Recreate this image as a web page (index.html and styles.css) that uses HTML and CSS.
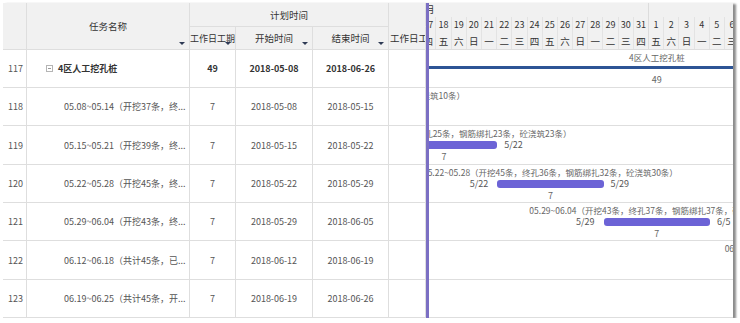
FILE: index.html
```html
<!DOCTYPE html>
<html lang="zh-CN">
<head>
    <meta charset="UTF-8">
    <title>施工进度计划</title>
    <link rel="stylesheet" href="styles.css">
</head>
<body>
    <div class="frame">
        <!-- left grid: task table -->
        <div class="grid">
            <div class="cell th tall"></div>
            <div class="cell th tall">任务名称<i class="sort"></i></div>
            <div class="cell th group">计划时间</div>
            <div class="cell th blank"></div>
            <div class="cell th small">工作日工期<i class="sort"></i></div>
            <div class="cell th">开始时间<i class="sort"></i></div>
            <div class="cell th">结束时间<i class="sort"></i></div>
            <div class="cell th cut">工作日工期</div>

            <div class="cell num">117</div>
            <div class="cell name parent">
                <svg class="toggle" width="7" height="7" viewBox="0 0 7 7"><rect x="0.5" y="0.5" width="6" height="6" fill="none" stroke="#b5b5b5"/><path d="M2 3.5h3" stroke="#999"/></svg>
                4区人工挖孔桩
            </div>
            <div class="cell b">49</div>
            <div class="cell b">2018-05-08</div>
            <div class="cell b">2018-06-26</div>
            <div class="cell"></div>

            <div class="cell num">118</div>
            <div class="cell name">05.08~05.14（开挖37条，终...</div>
            <div class="cell">7</div>
            <div class="cell">2018-05-08</div>
            <div class="cell">2018-05-15</div>
            <div class="cell"></div>

            <div class="cell num">119</div>
            <div class="cell name">05.15~05.21（开挖39条，终...</div>
            <div class="cell">7</div>
            <div class="cell">2018-05-15</div>
            <div class="cell">2018-05-22</div>
            <div class="cell"></div>

            <div class="cell num">120</div>
            <div class="cell name">05.22~05.28（开挖45条，终...</div>
            <div class="cell">7</div>
            <div class="cell">2018-05-22</div>
            <div class="cell">2018-05-29</div>
            <div class="cell"></div>

            <div class="cell num">121</div>
            <div class="cell name">05.29~06.04（开挖43条，终...</div>
            <div class="cell">7</div>
            <div class="cell">2018-05-29</div>
            <div class="cell">2018-06-05</div>
            <div class="cell"></div>

            <div class="cell num">122</div>
            <div class="cell name">06.12~06.18（共计45条，已...</div>
            <div class="cell">7</div>
            <div class="cell">2018-06-12</div>
            <div class="cell">2018-06-19</div>
            <div class="cell"></div>

            <div class="cell num">123</div>
            <div class="cell name">06.19~06.25（共计45条，开...</div>
            <div class="cell">7</div>
            <div class="cell">2018-06-19</div>
            <div class="cell">2018-06-26</div>
            <div class="cell"></div>
        </div>

        <div class="splitter"></div>

        <!-- right: gantt chart -->
        <div class="gantt">
            <div class="timeline">
                <div class="scale months" id="months"></div>
                <div class="scale days" id="days"></div>
                <div class="scale weeks" id="weeks"></div>
                <div id="rows"></div>
            </div>
        </div>
    </div>

    <script>
        const DAY = 15.2;
        const START = Date.UTC(2018, 4, 1);
        const WEEK = ['日', '一', '二', '三', '四', '五', '六'];
        // days that fall inside the visible part of the chart
        const FIRST = 16, LAST = 36;

        const months = [
            { label: '2018年5月', days: 31 },
            { label: '2018年6月', days: 30 }
        ];

        const tasks = [
            { name: '4区人工挖孔桩', start: '2018-05-08', end: '2018-06-26', dur: 49, summary: true },
            { name: '05.08~05.14（开挖37条，终孔30条，钢筋绑扎25条，砼浇筑10条）', start: '2018-05-08', end: '2018-05-15', dur: 7 },
            { name: '05.15~05.21（开挖39条，终孔25条，钢筋绑扎23条，砼浇筑23条）', start: '2018-05-15', end: '2018-05-22', dur: 7 },
            { name: '05.22~05.28（开挖45条，终孔36条，钢筋绑扎32条，砼浇筑30条）', start: '2018-05-22', end: '2018-05-29', dur: 7 },
            { name: '05.29~06.04（开挖43条，终孔37条，钢筋绑扎37条，砼浇筑35条）', start: '2018-05-29', end: '2018-06-05', dur: 7 },
            { name: '06.12~06.18（共计45条，已挖45条，终孔45条，钢筋绑扎45条，浇筑40条）', start: '2018-06-12', end: '2018-06-19', dur: 7 },
            { name: '06.19~06.25（共计45条，开挖45条，终孔45条，钢筋绑扎45条）', start: '2018-06-19', end: '2018-06-26', dur: 7 }
        ];

        function dayIndex(str) {
            const p = str.split('-');
            return (Date.UTC(+p[0], p[1] - 1, +p[2]) - START) / 86400000;
        }

        function shortDate(str) {
            const p = str.split('-');
            return (+p[1]) + '/' + (+p[2]);
        }

        function el(tag, cls, text) {
            const e = document.createElement(tag);
            if (cls) e.className = cls;
            if (text !== undefined) e.textContent = text;
            return e;
        }

        // time scale
        const monthRow = document.getElementById('months');
        const dayRow = document.getElementById('days');
        const weekRow = document.getElementById('weeks');
        months.forEach(m => {
            const cell = el('div', 'month', m.label);
            cell.style.width = (m.days * DAY) + 'px';
            monthRow.appendChild(cell);
        });
        dayRow.style.paddingLeft = weekRow.style.paddingLeft = (FIRST * DAY) + 'px';
        for (let i = FIRST; i <= LAST; i++) {
            const d = new Date(START + i * 86400000);
            const a = el('div', 'day', d.getUTCDate());
            const b = el('div', 'day', WEEK[d.getUTCDay()]);
            a.style.width = b.style.width = DAY + 'px';
            if (d.getUTCDate() === 31) { a.classList.add('last'); b.classList.add('last'); }
            dayRow.appendChild(a);
            weekRow.appendChild(b);
        }

        // task rows
        const rows = document.getElementById('rows');
        tasks.forEach((t, i) => {
            const row = el('div', i % 3 === 2 ? 'grow tall' : 'grow');
            const task = el('div', t.summary ? 'task sum' : 'task');
            task.style.left = (dayIndex(t.start) * DAY) + 'px';
            task.style.width = (t.dur * DAY) + 'px';

            task.appendChild(el('div', 'tlabel')).appendChild(el('span', '', t.name));
            const bar = el('div', 'tbar');
            if (!t.summary) {
                bar.appendChild(el('span', 'from', shortDate(t.start)));
                bar.appendChild(el('span', 'to', shortDate(t.end)));
            }
            task.appendChild(bar);
            task.appendChild(el('div', 'tdur', t.dur));

            row.appendChild(task);
            rows.appendChild(row);
        });
    </script>
</body>
</html>
```

FILE: styles.css
```css
* {
    box-sizing: border-box;
}
body {
    margin: 0;
    background-color: #fff;
    font-family: "Noto Sans CJK SC", sans-serif;
    color: #555;
}
.frame {
    display: flex;
    margin: 3px 0 0 3px;
    width: 730px;
    height: 315px;
    background-color: #fff;
    box-shadow: 3px 1px 2px rgba(0, 0, 0, 0.45);
    overflow: hidden;
}

/* task table */
.grid {
    flex: none;
    display: grid;
    width: 423px;
    grid-template-columns: 24px 163px 46px 77px 76px 37px;
    grid-template-rows: 24px 23px 38px 38px 39px 38px 38px 39px 38px;
}
.cell {
    display: flex;
    align-items: center;
    justify-content: center;
    border-right: 1px solid #dedede;
    border-bottom: 1px solid #dedede;
    font-size: 9px;
    white-space: nowrap;
    overflow: hidden;
}
.th {
    position: relative;
    background-color: #f1f1f1;
    color: #333;
    font-size: 9.5px;
}
.th.small {
    font-size: 9px;
}
.th.tall {
    grid-row: span 2;
}
.th.group {
    grid-column: span 3;
}
.th.blank {
    border-bottom-color: #f1f1f1;
}
.th.cut {
    justify-content: flex-start;
    padding-left: 1px;
}
.sort {
    position: absolute;
    right: 4px;
    bottom: 4px;
    border-left: 3px solid transparent;
    border-right: 3px solid transparent;
    border-top: 3px solid #2e3a55;
}
.num {
    justify-content: flex-start;
    padding-left: 5px;
}
.name {
    justify-content: flex-start;
    padding-left: 37px;
}
.name.parent {
    padding-left: 19px;
    font-weight: bold;
    color: #333;
}
.toggle {
    margin-right: 5px;
}
.b {
    font-weight: bold;
    color: #333;
}

.splitter {
    flex: none;
    width: 3px;
    background-color: #7b6fc3;
}

/* gantt chart */
.gantt {
    flex: 1;
    overflow: hidden;
}
.timeline {
    margin-left: -251px;
    width: 930px;
}
.scale {
    display: flex;
    background-color: #f1f1f1;
    color: #333;
}
.months {
    height: 14px;
}
.days {
    height: 16px;
}
.weeks {
    height: 17px;
    border-bottom: 1px solid #dedede;
}
.month {
    flex: none;
    border-right: 1px solid #dcdcdc;
    text-align: center;
    font-size: 9px;
    line-height: 14px;
}
.day {
    flex: none;
    border-right: 1px solid #e3e3e3;
    text-align: center;
    font-size: 9px;
    line-height: 16px;
}
.day.last {
    border-right-color: #dcdcdc;
}
.weeks .day {
    font-size: 9.5px;
}
.grow {
    position: relative;
    height: 38px;
    border-bottom: 1px solid #dedede;
}
.grow.tall {
    height: 39px;
}
.task {
    position: absolute;
    top: 0;
    display: flex;
    flex-direction: column;
    color: #666;
}
.tlabel {
    display: flex;
    justify-content: center;
    height: 14px;
    line-height: 14px;
    font-size: 8.5px;
    white-space: nowrap;
}
.tbar {
    position: relative;
    height: 8px;
    margin-top: 1px;
    background-color: #6c63d6;
    border-radius: 3px;
}
.tbar span {
    position: absolute;
    top: -3px;
    line-height: 14px;
    font-size: 9px;
    color: #555;
    white-space: nowrap;
}
.tbar .from {
    right: calc(100% + 9px);
}
.tbar .to {
    left: calc(100% + 7px);
}
.tdur {
    margin-top: 2px;
    text-align: center;
    line-height: 12px;
    font-size: 9px;
}
.sum .tbar {
    height: 3px;
    margin-top: 2px;
    border-radius: 0;
    background-color: #2d5495;
}
.sum .tdur {
    margin-top: 5px;
}
```
